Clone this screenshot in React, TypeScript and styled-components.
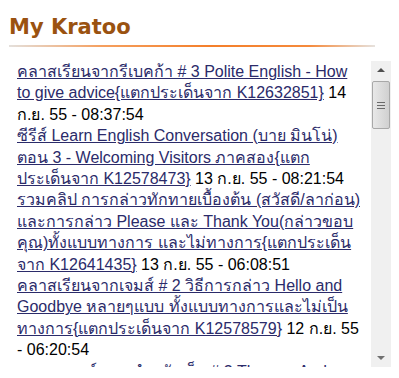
import styled, { createGlobalStyle } from "styled-components";

const GlobalStyle = createGlobalStyle`
  html, body {
    margin: 0;
    padding: 0;
    background: #ffffff;
  }
  body {
    font-family: "Liberation Sans", "Noto Sans", sans-serif;
  }
`;

// line breaks follow the original column width
const topics = [
  {
    title: "คลาสเรียนจากรีเบคก้า # 3 Polite English - How\nto give advice{แตกประเด็นจาก K12632851}",
    date: "14\nก.ย. 55 - 08:37:54",
  },
  {
    title: "ซีรีส์ Learn English Conversation (บาย มินโน่)\nตอน 3 - Welcoming Visitors ภาคสอง{แตก\nประเด็นจาก K12578473}",
    date: "13 ก.ย. 55 - 08:21:54",
  },
  {
    title: "รวมคลิป การกล่าวทักทายเบื้องต้น (สวัสดี/ลาก่อน)\nและการกล่าว Please และ Thank You(กล่าวขอบ\nคุณ)ทั้งแบบทางการ และไม่ทางการ{แตกประเด็น\nจาก K12641435}",
    date: "13 ก.ย. 55 - 06:08:51",
  },
  {
    title: "คลาสเรียนจากเจมส์ # 2 วิธีการกล่าว Hello and\nGoodbye หลายๆแบบ ทั้งแบบทางการและไม่เป็น\nทางการ{แตกประเด็นจาก K12578579}",
    date: "12 ก.ย. 55\n- 06:20:54",
  },
  {
    title: "เพลง แดนซ์ตาม สำหรับเด็ก # 3 Thomas And\nFriends{แตกประเด็นจาก K12578411}",
    date: "11 ก.ย. 55 - 09:12:40",
  },
];

export default function App() {
  return (
    <>
      <GlobalStyle />
      <Wrapper>
        <Title>My Kratoo</Title>
        <Rule />
        <Panel>
          <List>
            {topics.map((t) => (
              <Item key={t.date}>
                <TopicLink href="#">{t.title}</TopicLink> {t.date}
              </Item>
            ))}
          </List>
          <ScrollBar>
            <ArrowButton>
              <Arrow $dir="up" />
            </ArrowButton>
            <Track>
              <Thumb>
                <Grip />
                <Grip />
                <Grip />
              </Thumb>
            </Track>
            <ArrowButton>
              <Arrow $dir="down" />
            </ArrowButton>
          </ScrollBar>
        </Panel>
      </Wrapper>
    </>
  );
}

const Wrapper = styled.div`
  width: 382px;
  padding: 13px 0 0 9px;
`;

const Title = styled.h2`
  margin: 0;
  font-family: "DejaVu Sans", sans-serif;
  font-weight: bold;
  font-size: 21px;
  line-height: 28px;
  color: #9a5210;
`;

const Rule = styled.div`
  width: 366px;
  height: 2px;
  margin-top: 4px;
  background: linear-gradient(
    to right,
    #e4e0dc 0%,
    #f5a060 25%,
    #f47f2a 55%,
    #f58a3c 82%,
    #e6e2de 100%
  );
`;

const Panel = styled.div`
  display: flex;
  margin-top: 14px;
  height: 306px;
  overflow: hidden;
`;

const List = styled.div`
  flex: 1;
  padding-left: 8px;
  overflow: hidden;
`;

const Item = styled.div`
  font-family: "Liberation Sans", "Noto Sans", sans-serif;
  font-size: 16px;
  line-height: 21.4px;
  color: #000000;
  white-space: pre;
`;

const TopicLink = styled.a`
  color: #2b2b6a;
  text-decoration: underline;
`;

const ScrollBar = styled.div`
  width: 20px;
  margin-left: 3px;
  display: flex;
  flex-direction: column;
  background: #f0f0f0;
`;

const ArrowButton = styled.div`
  height: 18px;
  display: flex;
  align-items: center;
  justify-content: center;
`;

const Arrow = styled.div<{ $dir: "up" | "down" }>`
  width: 0;
  height: 0;
  border-left: 4px solid transparent;
  border-right: 4px solid transparent;
  ${(p) =>
    p.$dir === "up"
      ? "border-bottom: 4px solid #505050;"
      : "border-top: 4px solid #707070;"}
`;

const Track = styled.div`
  flex: 1;
  padding: 2px 1px;
`;

const Thumb = styled.div`
  height: 46px;
  border: 1px solid #a8a8a8;
  border-radius: 2px;
  background: linear-gradient(to right, #e8e8e8, #dcdcdc 50%, #d0d0d0);
  display: flex;
  flex-direction: column;
  align-items: center;
  justify-content: center;
  gap: 2px;
`;

const Grip = styled.div`
  width: 8px;
  height: 1px;
  background: #6a6a6a;
`;
